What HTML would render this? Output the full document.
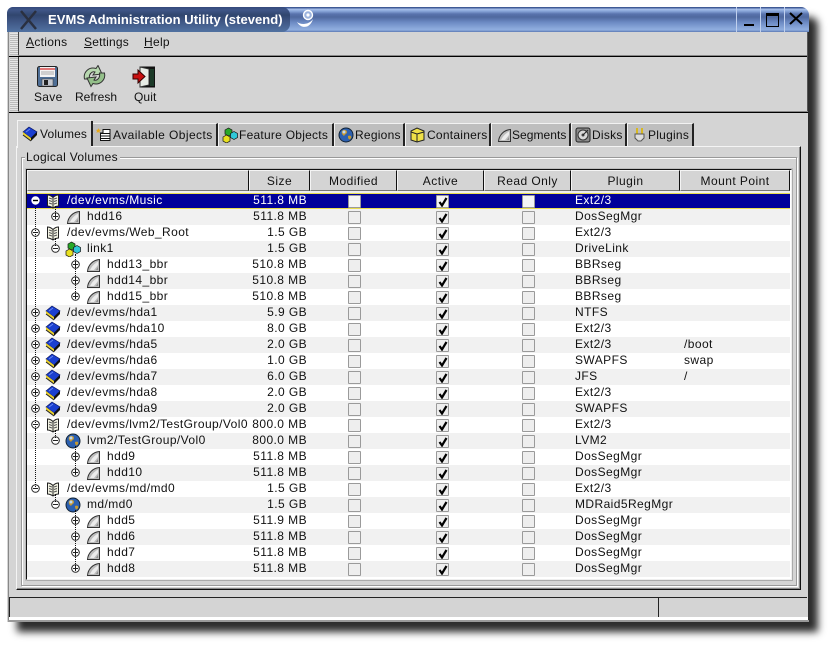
<!DOCTYPE html>
<html><head><meta charset="utf-8"><style>
html,body{margin:0;padding:0;background:#fff}
body{width:833px;height:646px;position:relative;overflow:hidden;font:12px "Liberation Sans",sans-serif;letter-spacing:.3px;color:#111}
div,span,svg{position:absolute}
u{text-decoration:underline}
#win{left:7px;top:7px;width:801px;height:615px;background:#d4d4d4;box-shadow:10px 10px 8px #2c2c2c;border-radius:6px 8px 0 0}
.hdl{background:repeating-linear-gradient(0deg,#bbb 0 1px,#e6e6e6 1px 2px)}
.bl{background:#000}
.tab{top:123px;height:23px;background:#bebebe;border-top:1px solid #f2f2f2;border-left:1px solid #f2f2f2;border-right:2px solid #222;box-sizing:border-box;line-height:22px;white-space:nowrap;letter-spacing:.25px}
.tab span{top:0;line-height:22px}
.h{top:170px;height:21px;background:#d4d4d4;border-top:1px solid #f4f4f4;border-left:1px solid #f4f4f4;border-right:1px solid #111;border-bottom:1px solid #777;box-sizing:border-box;text-align:center;line-height:20px;letter-spacing:.45px}
.r{left:27px;width:763px;height:16px;line-height:15px;white-space:nowrap;letter-spacing:.42px}
.g{background:#f1f1f1}.w{background:#fff}
.sel{background:#00009a;color:#fff;border-top:1px solid #e8dc50;border-bottom:1px solid #e8dc50;box-sizing:border-box;top:193px;line-height:13px}
.n{top:0}.d0{left:40px}.d1{left:60px}.d2{left:80px}
.sz{left:198px;width:82px;text-align:right;top:0}
.c{width:11px;height:11px;top:2px;border:1px solid #9a9a9a;background:#eee;border-radius:1px}
.m{left:321px}.a{left:409px}.o{left:495px}
.p{left:548px;top:0}.mp{left:657px;top:0}
.ck{left:1px;top:1px;width:10px;height:10px}
.ex{width:9px;height:9px;top:3px}
.e0{left:4px}.e1{left:24px}.e2{left:44px}
.ic{width:16px;height:16px;top:0}
.i0{left:18px}.i1{left:38px}.i2{left:58px}
.dotv{width:0;border-left:1px dotted #111}
</style></head><body>
<svg width="0" height="0" style="left:0;top:0"><defs>
<symbol id="plus" viewBox="0 0 9 9"><circle cx="4.5" cy="4.5" r="3.8" fill="#fff" stroke="#222"/><path d="M2 4.5h5M4.5 2v5" stroke="#222"/></symbol>
<symbol id="minus" viewBox="0 0 9 9"><circle cx="4.5" cy="4.5" r="3.8" fill="#fff" stroke="#222"/><path d="M2 4.5h5" stroke="#222"/></symbol>
<symbol id="minusS" viewBox="0 0 9 9"><circle cx="4.5" cy="4.5" r="4.2" fill="#fff"/><path d="M2 4.5h5" stroke="#000" stroke-width="1.4"/></symbol>
<symbol id="seg" viewBox="0 0 16 16"><path d="M2.500 14.500C3 8 8 3 14.500 2.500V14.500Z" fill="#bdbdbd" stroke="#333"/><path d="M5 13C7 9 9 7 13 4.500V8L9 13Z" fill="#ececec"/><path d="M11 13L13 10V13Z" fill="#8e8e8e"/></symbol>
<symbol id="book" viewBox="0 0 16 16"><path d="M1 6L7 1L15 6L9 12Z" fill="#1a3fd0" stroke="#0a1660" stroke-width=".7"/><path d="M1 6L9 12V15L1 9Z" fill="#e8d030"/><path d="M9 12L15 6V9L9 15Z" fill="#111"/><path d="M1 9L9 15" stroke="#222"/><path d="M4 6L8 3" stroke="#6a8af0"/></symbol>
<symbol id="open" viewBox="0 0 16 16"><path d="M2.500 2C4 2 6.500 3 8 4.500C9.500 3 12 2 13.500 2V13C12 13 9.500 14 8 15C6.500 14 4 13 2.500 13Z" fill="#f4f4e4" stroke="#222"/><path d="M8 4.500V15" stroke="#222"/><path d="M4 5l3 1M4 7.500l3 1M4 10l3 1M9 6l3-1M9 8.500l3-1M9 11l3-1" stroke="#555"/></symbol>
<symbol id="nodes" viewBox="0 0 16 16"><path d="M3 3L6.500 1L10 3V7L6.500 9L3 7Z" fill="#28a828" stroke="#111" stroke-width=".7"/><path d="M8.500 6.500L12 4.500L15.500 6.500V10.500L12 12.500L8.500 10.500Z" fill="#30c8d8" stroke="#111" stroke-width=".7"/><path d="M1 10L4.500 8L8 10V14L4.500 16L1 14Z" fill="#e8e020" stroke="#111" stroke-width=".7"/></symbol>
<symbol id="globe" viewBox="0 0 16 16"><circle cx="8" cy="8" r="7" fill="#2c60b0" stroke="#123"/><path d="M4 4C6 2 9 3 9 5C9 7 7 7 6 9C5 8 3 7 4 4ZM10 9C12 8 14 9 13 11C12 13 10 13 10 9Z" fill="#c89a30"/><circle cx="6" cy="5" r="1.5" fill="#bcd8f8"/></symbol>
<symbol id="ck" viewBox="0 0 10 10"><path d="M1.500 5L4 8.500L8.500 1" fill="none" stroke="#000" stroke-width="2.200"/></symbol>
</defs></svg>

<div id="win"></div>
<!-- title bar -->
<div style="left:7px;top:7px;width:802px;height:25px;border-radius:6px 8px 0 0;overflow:hidden;background:linear-gradient(180deg,#3f5a96 0,#3f5a96 1px,#a8c0ea 2px,#8ba8da 4px,#5973ad 7px,#4f699f 10px,#6a88c2 15px,#8dabdd 22px,#8fadde 23px,#5b78b4 25px)">
<div style="left:0;top:0;width:283px;height:25px;background:linear-gradient(180deg,#34497c 0,#3f5688 3px,#31466f 8px,#3e5583 14px,#50709f 24px);border-radius:6px 8px 8px 0"></div>
<svg style="left:12px;top:3px" width="20" height="20"><path d="M2 1L17 19M17 1L2 19" stroke="#2a3040" stroke-width="2.500"/></svg>
<div style="left:41px;top:4px;color:#fff;font-weight:bold;font-size:13px;letter-spacing:.05px;white-space:nowrap;line-height:18px">EVMS Administration Utility (stevend)</div>
<svg style="left:289px;top:1px" width="22" height="24"><path d="M1 14C5 17 13 17 17 11C14 21 5 21 1 14Z" fill="#fff"/><circle cx="12" cy="7" r="4.500" fill="#9cb4de" stroke="#fff" stroke-width="1.400"/><circle cx="12" cy="7" r="1.600" fill="#fff"/></svg>
<div style="left:729px;top:0;width:1px;height:25px;background:#c0d0ee"></div>
<div style="left:753px;top:0;width:1px;height:25px;background:#c0d0ee"></div>
<div style="left:777px;top:0;width:1px;height:25px;background:#c0d0ee"></div>
<div style="left:737px;top:17px;width:10px;height:2px;background:#000"></div>
<div style="left:759px;top:6px;width:11px;height:10px;border:1px solid #000;border-top-width:3px"></div>
<svg style="left:782px;top:5px" width="14" height="14"><path d="M1 1L13 12M13 1L1 12" stroke="#000" stroke-width="2"/></svg>
</div>
<div style="left:8px;top:32px;width:1px;height:590px;background:#888"></div>
<!-- menu -->
<div class="hdl" style="left:10px;top:33px;width:8px;height:22px"></div>
<div style="left:18px;top:32px;width:1px;height:24px;background:#444"></div>
<div style="left:26px;top:35px;line-height:15px"><u>A</u>ctions</div>
<div style="left:84px;top:35px;line-height:15px;letter-spacing:.2px"><u>S</u>ettings</div>
<div style="left:144px;top:35px;line-height:15px"><u>H</u>elp</div>
<div style="left:18px;top:55px;width:790px;height:1px;background:#888"></div>
<div class="bl" style="left:9px;top:56px;width:799px;height:1px"></div>
<div style="left:807px;top:32px;width:1px;height:80px;background:#555"></div>
<!-- toolbar -->
<div class="hdl" style="left:10px;top:58px;width:8px;height:53px"></div>
<div style="left:18px;top:57px;width:1px;height:55px;background:#333"></div>
<svg style="left:37px;top:66px" width="22" height="22"><rect x="0.5" y="0.5" width="20" height="20" rx="2" fill="#4f6f96" stroke="#222"/><rect x="3" y="1" width="15" height="10" fill="#f4f4f4"/><path d="M3 3h15" stroke="#d84040" stroke-width="1.400"/><path d="M4 6h13M4 8h13" stroke="#aaa"/><rect x="5" y="13" width="11" height="7" fill="#c4c8d0" stroke="#333" stroke-width=".5"/><rect x="7" y="14" width="4" height="5" fill="#222"/></svg>
<svg style="left:83px;top:65px" width="24" height="23"><path d="M1.500 14C0 7 6 1.500 13 3.500L15 .5L19 9L10 10L12 7C9 6 5.500 9 6.500 14Z" fill="#b8d8b0" stroke="#333"/><path d="M21.500 8C23 15 17 20.500 10 18.500L8 21.500L4 13L13 12L11 15C14 16 17.500 13 16.500 8Z" fill="#94c08a" stroke="#333"/></svg>
<svg style="left:132px;top:66px" width="24" height="22"><rect x="8" y="0.500" width="15" height="21" fill="#111"/><path d="M8 1L17 3V19L8 21Z" fill="#e8ece6" stroke="#333"/><path d="M18 3h4v17h-4z" fill="#1c3a28"/><path d="M1 8H6V4L13 10.500L6 17V13H1Z" fill="#c81010" stroke="#300"/></svg>
<div style="left:34px;top:90px;line-height:14px">Save</div>
<div style="left:75px;top:90px;line-height:14px;letter-spacing:0">Refresh</div>
<div style="left:134px;top:90px;line-height:14px;letter-spacing:.1px">Quit</div>
<div style="left:18px;top:111px;width:790px;height:1px;background:#888"></div>
<div class="bl" style="left:9px;top:112px;width:799px;height:1px"></div>

<!-- notebook -->
<div style="left:16px;top:146px;width:783px;height:442px;border-top:1px solid #f4f4f4;border-left:1px solid #f4f4f4;border-right:1px solid #111;border-bottom:1px solid #111;box-shadow:inset -1px -1px 0 #888"></div>
<div class="tab" style="left:92px;width:126px"><svg class="ic" style="left:3px;top:3px" width="16" height="16"><path d="M2 1l1 1.500l2 .5l-1.500 1l.5 2l-2-1l-1.500 1l.5-2l-1-1l2-.5z" fill="#e8a818"/><path d="M7 2.500h7v11H4.500V6H7z" fill="#fff" stroke="#111"/><path d="M5 6.500h9M5 9h9M5 11.500h9" stroke="#111"/></svg><span style="left:20px;letter-spacing:.42px">Available Objects</span></div>
<div class="tab" style="left:218px;width:116px"><svg class="ic" style="left:3px;top:3px" width="16" height="16"><use href="#nodes"/></svg><span style="left:20px">Feature Objects</span></div>
<div class="tab" style="left:334px;width:71px"><svg class="ic" style="left:3px;top:3px" width="16" height="16"><use href="#globe"/></svg><span style="left:20px">Regions</span></div>
<div class="tab" style="left:405px;width:86px"><svg class="ic" style="left:3px;top:3px" width="16" height="16"><path d="M2 4L8 1L15 4V13L8 15L2 13Z" fill="#efe048" stroke="#222"/><path d="M2 5L8 7L15 5M8 7V15" fill="none" stroke="#222"/></svg><span style="left:21px">Containers</span></div>
<div class="tab" style="left:491px;width:80px"><svg class="ic" style="left:4px;top:3px" width="16" height="16"><use href="#seg"/></svg><span style="left:20px;letter-spacing:.05px">Segments</span></div>
<div class="tab" style="left:571px;width:56px"><svg class="ic" style="left:3px;top:3px" width="16" height="16"><rect x="1" y="1" width="14" height="14" rx="2" fill="#8c8c8c" stroke="#222"/><circle cx="8" cy="8" r="5" fill="#d8d8d8" stroke="#333"/><circle cx="8" cy="8" r="1.500" fill="#444"/><path d="M8 8L13 3" stroke="#222"/></svg><span style="left:20px">Disks</span></div>
<div class="tab" style="left:627px;width:67px"><svg class="ic" style="left:4px;top:3px" width="16" height="16"><path d="M5 1v6M10 1v6" stroke="#d8b820" stroke-width="2"/><path d="M3 7H12V11L9 14H6L3 11Z" fill="#ddd" stroke="#555"/></svg><span style="left:20px">Plugins</span></div>
<div style="left:17px;top:120px;width:74px;height:28px;background:#d4d4d4;border-top:1px solid #f4f4f4;border-left:1px solid #f4f4f4;box-sizing:border-box"></div>
<div style="left:91px;top:121px;width:2px;height:25px;background:#222"></div>
<svg class="ic" style="left:22px;top:126px" width="16" height="16"><use href="#book"/></svg>
<div style="left:40px;top:127px;line-height:14px;letter-spacing:.15px">Volumes</div>

<!-- group -->
<div style="left:21px;top:157px;width:774px;height:427px;border:1px solid #999;box-shadow:inset 1px 1px 0 #fff,1px 1px 0 #fff"></div>
<div style="left:25px;top:150px;background:#d4d4d4;padding:0 2px 0 1px;line-height:15px">Logical Volumes</div>
<div style="left:26px;top:169px;width:764px;height:409px;background:#fff;border-top:1px solid #111;border-left:1px solid #111;border-right:1px solid #eee;border-bottom:1px solid #eee;box-shadow:1px 1px 0 #aaa,0 0 0 1px #bbb"></div>

<!-- headers -->
<div class="h" style="left:27px;width:222px"></div>
<div class="h" style="left:249px;width:61px">Size</div>
<div class="h" style="left:310px;width:87px">Modified</div>
<div class="h" style="left:397px;width:87px">Active</div>
<div class="h" style="left:484px;width:87px">Read Only</div>
<div class="h" style="left:571px;width:109px">Plugin</div>
<div class="h" style="left:680px;width:110px">Mount Point</div>
<div style="left:27px;top:191px;width:763px;height:2px;background:#eee"></div>

<!-- rows -->
<div class="r sel"><svg class="ex e0" style="top:2px"><use href="#minusS"/></svg><svg class="ic i0" style="top:-1px"><use href="#open"/></svg><span class="n d0">/dev/evms/Music</span><span class="sz">511.8 MB</span><span class="c m" style="top:1px;background:#f4f4f4"></span><span class="c a" style="top:1px;background:#f4f4f4"><svg class="ck"><use href="#ck"/></svg></span><span class="c o" style="top:1px;background:#f4f4f4"></span><span class="p">Ext2/3</span></div>
<div class="r g" style="top:209px"><svg class="ex e1"><use href="#plus"/></svg><svg class="ic i1"><use href="#seg"/></svg><span class="n d1">hdd16</span><span class="sz">511.8 MB</span><span class="c m"></span><span class="c a"><svg class="ck"><use href="#ck"/></svg></span><span class="c o"></span><span class="p">DosSegMgr</span></div>
<div class="r w" style="top:225px"><svg class="ex e0"><use href="#minus"/></svg><svg class="ic i0"><use href="#open"/></svg><span class="n d0">/dev/evms/Web_Root</span><span class="sz">1.5 GB</span><span class="c m"></span><span class="c a"><svg class="ck"><use href="#ck"/></svg></span><span class="c o"></span><span class="p">Ext2/3</span></div>
<div class="r g" style="top:241px"><svg class="ex e1"><use href="#minus"/></svg><svg class="ic i1"><use href="#nodes"/></svg><span class="n d1">link1</span><span class="sz">1.5 GB</span><span class="c m"></span><span class="c a"><svg class="ck"><use href="#ck"/></svg></span><span class="c o"></span><span class="p">DriveLink</span></div>
<div class="r w" style="top:257px"><svg class="ex e2"><use href="#plus"/></svg><svg class="ic i2"><use href="#seg"/></svg><span class="n d2">hdd13_bbr</span><span class="sz">510.8 MB</span><span class="c m"></span><span class="c a"><svg class="ck"><use href="#ck"/></svg></span><span class="c o"></span><span class="p">BBRseg</span></div>
<div class="r g" style="top:273px"><svg class="ex e2"><use href="#plus"/></svg><svg class="ic i2"><use href="#seg"/></svg><span class="n d2">hdd14_bbr</span><span class="sz">510.8 MB</span><span class="c m"></span><span class="c a"><svg class="ck"><use href="#ck"/></svg></span><span class="c o"></span><span class="p">BBRseg</span></div>
<div class="r w" style="top:289px"><svg class="ex e2"><use href="#plus"/></svg><svg class="ic i2"><use href="#seg"/></svg><span class="n d2">hdd15_bbr</span><span class="sz">510.8 MB</span><span class="c m"></span><span class="c a"><svg class="ck"><use href="#ck"/></svg></span><span class="c o"></span><span class="p">BBRseg</span></div>
<div class="r g" style="top:305px"><svg class="ex e0"><use href="#plus"/></svg><svg class="ic i0"><use href="#book"/></svg><span class="n d0">/dev/evms/hda1</span><span class="sz">5.9 GB</span><span class="c m"></span><span class="c a"><svg class="ck"><use href="#ck"/></svg></span><span class="c o"></span><span class="p">NTFS</span></div>
<div class="r w" style="top:321px"><svg class="ex e0"><use href="#plus"/></svg><svg class="ic i0"><use href="#book"/></svg><span class="n d0">/dev/evms/hda10</span><span class="sz">8.0 GB</span><span class="c m"></span><span class="c a"><svg class="ck"><use href="#ck"/></svg></span><span class="c o"></span><span class="p">Ext2/3</span></div>
<div class="r g" style="top:337px"><svg class="ex e0"><use href="#plus"/></svg><svg class="ic i0"><use href="#book"/></svg><span class="n d0">/dev/evms/hda5</span><span class="sz">2.0 GB</span><span class="c m"></span><span class="c a"><svg class="ck"><use href="#ck"/></svg></span><span class="c o"></span><span class="p">Ext2/3</span><span class="mp">/boot</span></div>
<div class="r w" style="top:353px"><svg class="ex e0"><use href="#plus"/></svg><svg class="ic i0"><use href="#book"/></svg><span class="n d0">/dev/evms/hda6</span><span class="sz">1.0 GB</span><span class="c m"></span><span class="c a"><svg class="ck"><use href="#ck"/></svg></span><span class="c o"></span><span class="p">SWAPFS</span><span class="mp">swap</span></div>
<div class="r g" style="top:369px"><svg class="ex e0"><use href="#plus"/></svg><svg class="ic i0"><use href="#book"/></svg><span class="n d0">/dev/evms/hda7</span><span class="sz">6.0 GB</span><span class="c m"></span><span class="c a"><svg class="ck"><use href="#ck"/></svg></span><span class="c o"></span><span class="p">JFS</span><span class="mp">/</span></div>
<div class="r w" style="top:385px"><svg class="ex e0"><use href="#plus"/></svg><svg class="ic i0"><use href="#book"/></svg><span class="n d0">/dev/evms/hda8</span><span class="sz">2.0 GB</span><span class="c m"></span><span class="c a"><svg class="ck"><use href="#ck"/></svg></span><span class="c o"></span><span class="p">Ext2/3</span></div>
<div class="r g" style="top:401px"><svg class="ex e0"><use href="#plus"/></svg><svg class="ic i0"><use href="#book"/></svg><span class="n d0">/dev/evms/hda9</span><span class="sz">2.0 GB</span><span class="c m"></span><span class="c a"><svg class="ck"><use href="#ck"/></svg></span><span class="c o"></span><span class="p">SWAPFS</span></div>
<div class="r w" style="top:417px"><svg class="ex e0"><use href="#minus"/></svg><svg class="ic i0"><use href="#open"/></svg><span class="n d0">/dev/evms/lvm2/TestGroup/Vol0</span><span class="sz">800.0 MB</span><span class="c m"></span><span class="c a"><svg class="ck"><use href="#ck"/></svg></span><span class="c o"></span><span class="p">Ext2/3</span></div>
<div class="r g" style="top:433px"><svg class="ex e1"><use href="#minus"/></svg><svg class="ic i1"><use href="#globe"/></svg><span class="n d1">lvm2/TestGroup/Vol0</span><span class="sz">800.0 MB</span><span class="c m"></span><span class="c a"><svg class="ck"><use href="#ck"/></svg></span><span class="c o"></span><span class="p">LVM2</span></div>
<div class="r w" style="top:449px"><svg class="ex e2"><use href="#plus"/></svg><svg class="ic i2"><use href="#seg"/></svg><span class="n d2">hdd9</span><span class="sz">511.8 MB</span><span class="c m"></span><span class="c a"><svg class="ck"><use href="#ck"/></svg></span><span class="c o"></span><span class="p">DosSegMgr</span></div>
<div class="r g" style="top:465px"><svg class="ex e2"><use href="#plus"/></svg><svg class="ic i2"><use href="#seg"/></svg><span class="n d2">hdd10</span><span class="sz">511.8 MB</span><span class="c m"></span><span class="c a"><svg class="ck"><use href="#ck"/></svg></span><span class="c o"></span><span class="p">DosSegMgr</span></div>
<div class="r w" style="top:481px"><svg class="ex e0"><use href="#minus"/></svg><svg class="ic i0"><use href="#open"/></svg><span class="n d0">/dev/evms/md/md0</span><span class="sz">1.5 GB</span><span class="c m"></span><span class="c a"><svg class="ck"><use href="#ck"/></svg></span><span class="c o"></span><span class="p">Ext2/3</span></div>
<div class="r g" style="top:497px"><svg class="ex e1"><use href="#minus"/></svg><svg class="ic i1"><use href="#globe"/></svg><span class="n d1">md/md0</span><span class="sz">1.5 GB</span><span class="c m"></span><span class="c a"><svg class="ck"><use href="#ck"/></svg></span><span class="c o"></span><span class="p">MDRaid5RegMgr</span></div>
<div class="r w" style="top:513px"><svg class="ex e2"><use href="#plus"/></svg><svg class="ic i2"><use href="#seg"/></svg><span class="n d2">hdd5</span><span class="sz">511.9 MB</span><span class="c m"></span><span class="c a"><svg class="ck"><use href="#ck"/></svg></span><span class="c o"></span><span class="p">DosSegMgr</span></div>
<div class="r g" style="top:529px"><svg class="ex e2"><use href="#plus"/></svg><svg class="ic i2"><use href="#seg"/></svg><span class="n d2">hdd6</span><span class="sz">511.8 MB</span><span class="c m"></span><span class="c a"><svg class="ck"><use href="#ck"/></svg></span><span class="c o"></span><span class="p">DosSegMgr</span></div>
<div class="r w" style="top:545px"><svg class="ex e2"><use href="#plus"/></svg><svg class="ic i2"><use href="#seg"/></svg><span class="n d2">hdd7</span><span class="sz">511.8 MB</span><span class="c m"></span><span class="c a"><svg class="ck"><use href="#ck"/></svg></span><span class="c o"></span><span class="p">DosSegMgr</span></div>
<div class="r g" style="top:561px"><svg class="ex e2"><use href="#plus"/></svg><svg class="ic i2"><use href="#seg"/></svg><span class="n d2">hdd8</span><span class="sz">511.8 MB</span><span class="c m"></span><span class="c a"><svg class="ck"><use href="#ck"/></svg></span><span class="c o"></span><span class="p">DosSegMgr</span></div>

<!-- tree lines -->
<div class="dotv" style="left:35px;top:206px;height:223px"></div>
<div class="dotv" style="left:35px;top:429px;height:60px"></div>
<div class="dotv" style="left:55px;top:206px;height:8px"></div>
<div class="dotv" style="left:55px;top:238px;height:8px"></div>
<div class="dotv" style="left:75px;top:254px;height:44px"></div>
<div class="dotv" style="left:55px;top:430px;height:8px"></div>
<div class="dotv" style="left:75px;top:446px;height:28px"></div>
<div class="dotv" style="left:55px;top:494px;height:8px"></div>
<div class="dotv" style="left:75px;top:510px;height:60px"></div>

<!-- status -->
<div style="left:9px;top:597px;width:650px;height:20px;background:#d4d4d4;border-top:1px solid #222;border-left:1px solid #222;box-sizing:border-box"></div>
<div style="left:658px;top:597px;width:149px;height:20px;background:#d4d4d4;border-top:1px solid #222;border-left:1px solid #222;box-sizing:border-box"></div>
<div style="left:9px;top:617px;width:799px;height:3px;background:#fff"></div>
<div style="left:8px;top:620px;width:801px;height:2px;background:#999"></div>
</body></html>
